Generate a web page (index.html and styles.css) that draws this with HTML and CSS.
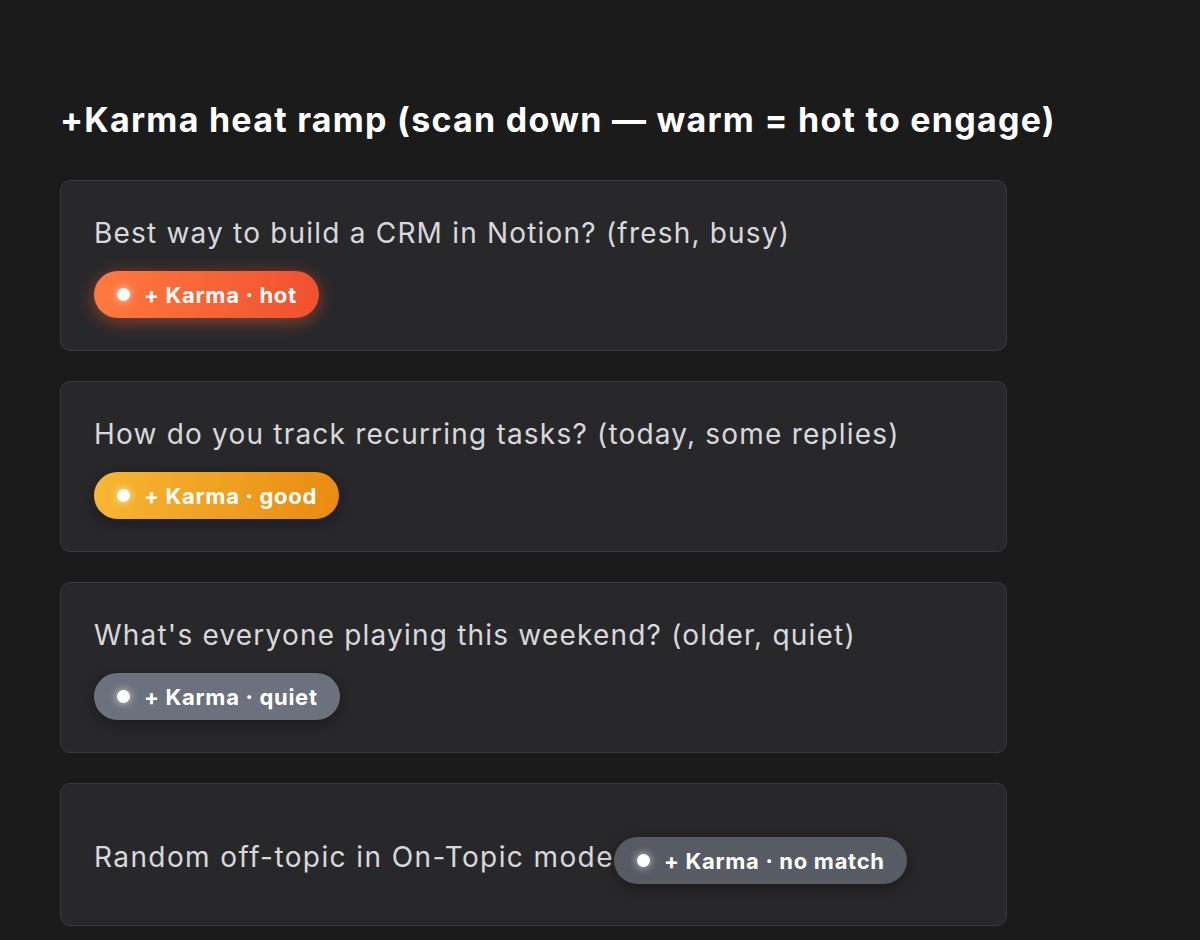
FILE: index.html
```html
<!DOCTYPE html>
<html lang="en">
<head>
<meta charset="utf-8">
<title>+Karma heat ramp</title>
<link rel="stylesheet" href="styles.css">
</head>
<body>
<main class="page">
  <h2 class="heading">+Karma heat ramp (scan down — warm = hot to engage)</h2>
  <div class="list">
    <div class="card">
      <div class="title">Best way to build a CRM in Notion? (fresh, busy)</div>
      <span class="badge badge-hot"><span class="dot"></span>+ Karma · hot</span>
    </div>
    <div class="card">
      <div class="title">How do you track recurring tasks? (today, some replies)</div>
      <span class="badge badge-good"><span class="dot"></span>+ Karma · good</span>
    </div>
    <div class="card">
      <div class="title">What's everyone playing this weekend? (older, quiet)</div>
      <span class="badge badge-quiet"><span class="dot"></span>+ Karma · quiet</span>
    </div>
    <div class="card card-inline">
      <div class="title-inline">Random off-topic in On-Topic mode<span class="badge badge-none"><span class="dot"></span>+ Karma · no match</span></div>
    </div>
  </div>
</main>
</body>
</html>
```

FILE: styles.css
```css
* { box-sizing: border-box; }

html, body {
  margin: 0;
  padding: 0;
  background: #1b1b1c;
}

body {
  font-family: Inter, "Noto Sans", "Liberation Sans", sans-serif;
  font-optical-sizing: none;
  color: #d6d6da;
}

.page {
  padding: 100px 60px 40px;
}

.heading {
  margin: 0 0 40px;
  font-size: 34px;
  line-height: 40px;
  font-weight: 700;
  letter-spacing: 1.25px;
  color: #ffffff;
}

.list {
  display: flex;
  flex-direction: column;
  gap: 30px;
  width: 947px;
}

.card {
  background: #28282b;
  border: 1px solid #3a3a3d;
  border-radius: 10px;
  padding: 32px 33px;
}

.card-inline {
  padding: 35px 33px 41px;
}

.title,
.title-inline {
  font-size: 28px;
  line-height: 40px;
  letter-spacing: 1.2px;
  color: #d8d8dc;
}

.title-inline {
  letter-spacing: 1.4px;
}

.badge {
  display: inline-flex;
  align-items: center;
  gap: 14px;
  margin-top: 18px;
  height: 47px;
  padding: 0 22px 0 23px;
  border-radius: 24px;
  font-size: 22px;
  font-weight: 700;
  letter-spacing: 0.7px;
  color: #ffffff;
  line-height: 26px;
  white-space: nowrap;
}

.dot {
  width: 13px;
  height: 13px;
  border-radius: 50%;
  background: #ffffff;
  box-shadow: 0 0 8px rgba(255, 255, 255, 0.75);
  flex: none;
}

.badge-hot {
  background: linear-gradient(100deg, #ff7a3e 0%, #f0502f 100%);
  box-shadow: 0 4px 18px rgba(255, 96, 48, 0.45);
}

.badge-good {
  background: linear-gradient(100deg, #f7b733 0%, #e98b10 100%);
  box-shadow: 0 4px 16px rgba(0, 0, 0, 0.35);
}

.badge-quiet {
  background: #6c727d;
  box-shadow: 0 4px 16px rgba(0, 0, 0, 0.35);
}

.badge-none {
  background: #575b64;
  box-shadow: 0 4px 16px rgba(0, 0, 0, 0.35);
}
```
